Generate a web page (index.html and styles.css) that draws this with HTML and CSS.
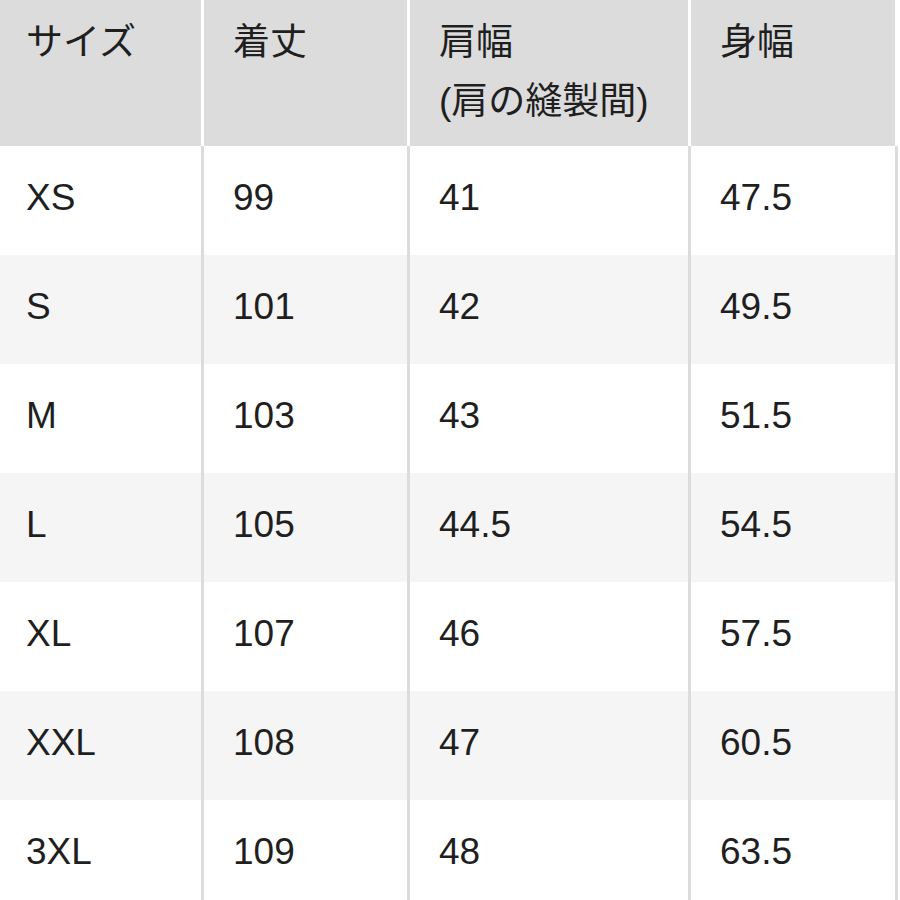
FILE: index.html
```html
<!DOCTYPE html>
<html lang="ja">
<head>
<meta charset="utf-8">
<title>サイズ表</title>
<link rel="stylesheet" href="styles.css">
</head>
<body>
<div class="size-table">
  <div class="row head">
    <div class="cell">サイズ</div>
    <div class="cell">着丈</div>
    <div class="cell">肩幅<br>(肩の縫製間)</div>
    <div class="cell">身幅</div>
  </div>
  <div class="row">
    <div class="cell">XS</div><div class="cell">99</div><div class="cell">41</div><div class="cell">47.5</div>
  </div>
  <div class="row alt">
    <div class="cell">S</div><div class="cell">101</div><div class="cell">42</div><div class="cell">49.5</div>
  </div>
  <div class="row">
    <div class="cell">M</div><div class="cell">103</div><div class="cell">43</div><div class="cell">51.5</div>
  </div>
  <div class="row alt">
    <div class="cell">L</div><div class="cell">105</div><div class="cell">44.5</div><div class="cell">54.5</div>
  </div>
  <div class="row">
    <div class="cell">XL</div><div class="cell">107</div><div class="cell">46</div><div class="cell">57.5</div>
  </div>
  <div class="row alt">
    <div class="cell">XXL</div><div class="cell">108</div><div class="cell">47</div><div class="cell">60.5</div>
  </div>
  <div class="row">
    <div class="cell">3XL</div><div class="cell">109</div><div class="cell">48</div><div class="cell">63.5</div>
  </div>
</div>
</body>
</html>
```

FILE: styles.css
```css
html, body {
  margin: 0;
  padding: 0;
  background: #ffffff;
}

body {
  font-family: "Liberation Sans", "Noto Sans CJK JP", sans-serif;
  font-size: 37px;
  color: #1f1f1f;
  overflow: hidden;
}

.size-table {
  width: 898px;
}

.row {
  display: grid;
  grid-template-columns: 204px 206px 281px 207px;
  height: 109px;
  background: #ffffff;
}

.row.alt {
  background: #f5f5f5;
}

.cell {
  box-sizing: border-box;
  border-right: 3px solid #dcdcdc;
  padding: 0 0 6px 29px;
  display: flex;
  align-items: center;
  line-height: 44px;
}

.cell:first-child {
  padding-left: 26px;
}

.row.head {
  height: 146px;
  background: #dcdcdc;
}

.row.head .cell {
  display: block;
  border-right-color: #ffffff;
  padding-top: 13px;
  padding-bottom: 0;
  line-height: 59px;
}
```
